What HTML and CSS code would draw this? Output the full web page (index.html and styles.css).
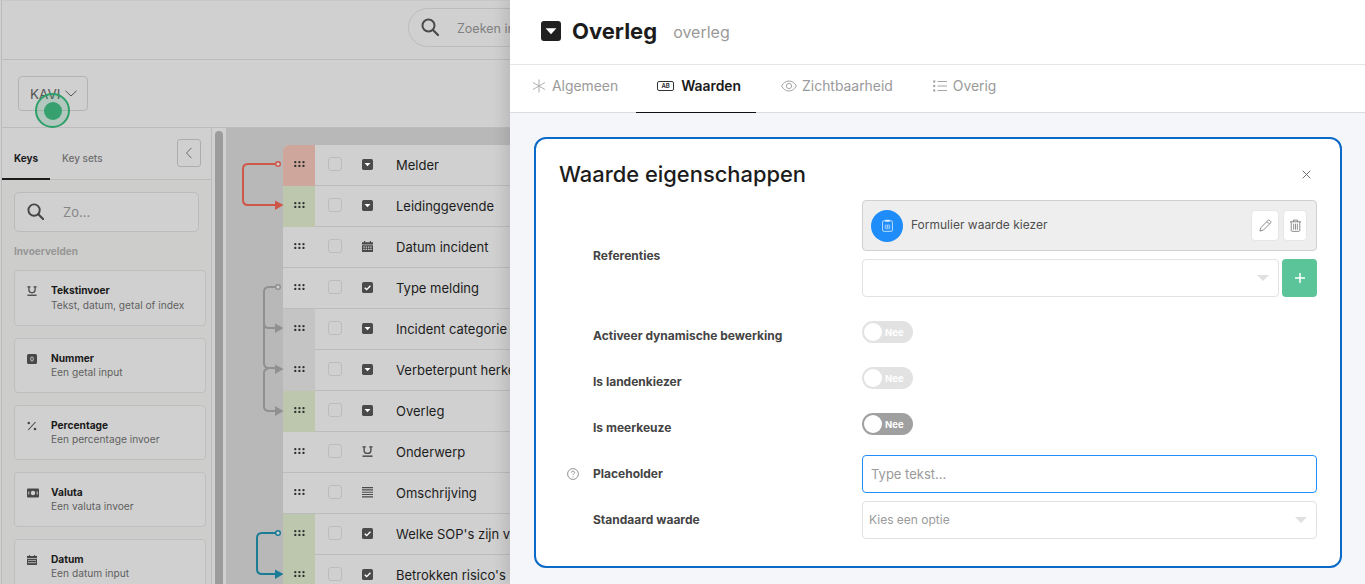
FILE: index.html
```html
<!DOCTYPE html>
<html lang="nl">
<head>
<meta charset="utf-8">
<title>Overleg</title>
<link rel="stylesheet" href="styles.css">
</head>
<body>
<svg class="defs" width="0" height="0" aria-hidden="true">
  <symbol id="i-drop" viewBox="0 0 20 20"><rect width="20" height="20" rx="3" fill="currentColor"/><path d="M4.600 7.200h10.800L10 13.200z" fill="#fff"/></symbol>
  <symbol id="i-grip" viewBox="0 0 11 6"><g fill="currentColor"><circle cx="1.300" cy="1.200" r="1.150"/><circle cx="5.400" cy="1.200" r="1.150"/><circle cx="9.500" cy="1.200" r="1.150"/><circle cx="1.300" cy="4.900" r="1.150"/><circle cx="5.400" cy="4.900" r="1.150"/><circle cx="9.500" cy="4.900" r="1.150"/></g></symbol>
  <symbol id="i-check" viewBox="0 0 12 12"><rect width="12" height="12" rx="2" fill="currentColor"/><path d="M3 6.200l2.100 2.100L9.200 4" fill="none" stroke="#fff" stroke-width="1.500"/></symbol>
  <symbol id="i-cal" viewBox="0 0 12 12"><path fill="currentColor" fill-rule="evenodd" d="M2.200 0h1.300v1.300h5V0h1.300v1.300H12v2.600H0V1.300h2.200zM0 4.700h12V12H0zm1.500 1.200v1.400H3V5.900zm2.500 0v1.400h1.500V5.900zm2.500 0v1.400H8V5.900zm2.500 0v1.400h1.500V5.900zm-7.500 2.600v1.400H3V8.500zm2.500 0v1.400h1.500V8.500zm2.500 0v1.400H8V8.500zm2.500 0v1.400h1.500V8.500z"/></symbol>
  <symbol id="i-under" viewBox="0 0 12 12"><path fill="none" stroke="currentColor" stroke-width="1.500" d="M.5 1h3.700M7.800 1h3.700M2.300 1v3.600c0 2.300 1.400 3.500 3.700 3.500s3.700-1.200 3.700-3.500V1"/><path stroke="currentColor" stroke-width="1.600" d="M.5 11.100h11"/></symbol>
  <symbol id="i-lines" viewBox="0 0 12 12"><path stroke="currentColor" stroke-width="1.300" d="M0 .7h12M0 3.200h12M0 5.700h12M0 8.200h12M0 10.700h12" fill="none"/></symbol>
  <symbol id="i-search" viewBox="0 0 18 18"><circle cx="7.500" cy="7.500" r="6" fill="none" stroke="currentColor" stroke-width="2"/><path d="M12 12l5 5" stroke="currentColor" stroke-width="2.200" stroke-linecap="round"/></symbol>
</svg>

<div class="app">
  <header class="topbar">
    <div class="pill">
      <svg class="pill-icon"><use href="#i-search"/></svg>
      <span class="pill-text">Zoeken in</span>
    </div>
  </header>
  <div class="toolbar">
    <button class="kavi">KAVI
      <svg class="kavi-chev" viewBox="0 0 12 7"><path d="M.5.800L6 6l5.500-5.200" fill="none" stroke="currentColor"/></svg>
    </button>
  </div>
  <div class="main">
    <aside class="side">
      <div class="side-tabs">
        <span class="side-tab side-tab-on">Keys</span>
        <span class="side-tab">Key sets</span>
        <button class="collapse"><svg class="collapse-icon" viewBox="0 0 8 12"><path d="M6.500.800L1.500 6l5 5.200" fill="none" stroke="currentColor"/></svg></button>
      </div>
      <div class="side-search">
        <svg class="side-search-icon"><use href="#i-search"/></svg>
        <span>Zo...</span>
      </div>
      <div class="side-label">Invoervelden</div>
      <div class="kcards">
        <div class="kcard kcard-first">
          <svg class="kcard-icon"><use href="#i-under"/></svg>
          <div><div class="kcard-title">Tekstinvoer</div><div class="kcard-desc kcard-desc-first">Tekst, datum, getal of index</div></div>
        </div>
        <div class="kcard">
          <svg class="kcard-icon" viewBox="0 0 10 10"><rect width="10" height="10" rx="1.500" fill="currentColor"/><rect x="3.800" y="3" width="2.400" height="4" rx="1.100" fill="none" stroke="#d0d0d0" stroke-width=".9"/></svg>
          <div><div class="kcard-title">Nummer</div><div class="kcard-desc">Een getal input</div></div>
        </div>
        <div class="kcard">
          <svg class="kcard-icon" viewBox="0 0 10 10"><path d="M1.200 9L8.500 1" stroke="currentColor" stroke-width="1.100"/><circle cx="1.800" cy="2" r="1.300" fill="currentColor"/><circle cx="8" cy="8" r="1.300" fill="currentColor"/></svg>
          <div><div class="kcard-title">Percentage</div><div class="kcard-desc">Een percentage invoer</div></div>
        </div>
        <div class="kcard">
          <svg class="kcard-icon kcard-icon-wide" viewBox="0 0 12 10"><path fill="currentColor" fill-rule="evenodd" d="M1 .5h10a1 1 0 011 1v7a1 1 0 01-1 1H1a1 1 0 01-1-1v-7a1 1 0 011-1zM6 2.800a2.200 2.200 0 100 4.400 2.200 2.200 0 000-4.400zM1.300 3.500v3h1v-3zm8.400 0v3h1v-3z"/></svg>
          <div><div class="kcard-title">Valuta</div><div class="kcard-desc">Een valuta invoer</div></div>
        </div>
        <div class="kcard">
          <svg class="kcard-icon"><use href="#i-cal"/></svg>
          <div><div class="kcard-title">Datum</div><div class="kcard-desc">Een datum input</div></div>
        </div>
      </div>
    </aside>
    <div class="track"><div class="thumb"></div></div>
    <section class="canvas">
      <div class="row row-first"><span class="cell cell-red"><svg class="grip"><use href="#i-grip"/></svg></span><span class="box"></span><svg class="ricon"><use href="#i-drop"/></svg><span class="rname">Melder</span></div>
      <div class="row"><span class="cell cell-green"><svg class="grip"><use href="#i-grip"/></svg></span><span class="box"></span><svg class="ricon"><use href="#i-drop"/></svg><span class="rname">Leidinggevende</span></div>
      <div class="row"><span class="cell"><svg class="grip"><use href="#i-grip"/></svg></span><span class="box"></span><svg class="ricon"><use href="#i-cal"/></svg><span class="rname">Datum incident</span></div>
      <div class="row"><span class="cell"><svg class="grip"><use href="#i-grip"/></svg></span><span class="box"></span><svg class="ricon"><use href="#i-check"/></svg><span class="rname">Type melding</span></div>
      <div class="row"><span class="cell cell-grey"><svg class="grip"><use href="#i-grip"/></svg></span><span class="box"></span><svg class="ricon"><use href="#i-drop"/></svg><span class="rname">Incident categorie</span></div>
      <div class="row"><span class="cell cell-grey"><svg class="grip"><use href="#i-grip"/></svg></span><span class="box"></span><svg class="ricon"><use href="#i-drop"/></svg><span class="rname">Verbeterpunt herkend</span></div>
      <div class="row"><span class="cell cell-green"><svg class="grip"><use href="#i-grip"/></svg></span><span class="box"></span><svg class="ricon"><use href="#i-drop"/></svg><span class="rname">Overleg</span></div>
      <div class="row"><span class="cell"><svg class="grip"><use href="#i-grip"/></svg></span><span class="box"></span><svg class="ricon"><use href="#i-under"/></svg><span class="rname">Onderwerp</span></div>
      <div class="row"><span class="cell"><svg class="grip"><use href="#i-grip"/></svg></span><span class="box"></span><svg class="ricon"><use href="#i-lines"/></svg><span class="rname">Omschrijving</span></div>
      <div class="row"><span class="cell cell-green"><svg class="grip"><use href="#i-grip"/></svg></span><span class="box"></span><svg class="ricon"><use href="#i-check"/></svg><span class="rname">Welke SOP's zijn van</span></div>
      <div class="row"><span class="cell cell-green"><svg class="grip"><use href="#i-grip"/></svg></span><span class="box"></span><svg class="ricon"><use href="#i-check"/></svg><span class="rname">Betrokken risico's</span></div>
    </section>
  </div>

  <svg class="wires" viewBox="0 0 510 584">
    <g class="wire-red">
      <path d="M275.500 164H248q-5 0-5 5v31q0 5 5 5h27"/>
      <circle cx="278" cy="164" r="2.300"/>
      <polygon points="275,200.500 283.500,205 275,210"/>
    </g>
    <g class="wire-grey">
      <path d="M275.500 287H269q-5 0-5 5v31q0 5 5 5h6M264 320v43q0 5 5 5h6"/>
      <path d="M268 369q-4 0-4 4v33q0 5 5 5h6"/>
      <circle cx="278" cy="287" r="2.300"/>
      <polygon points="275,323.500 283.500,328 275,333"/>
      <polygon points="275,364.500 283.500,369 275,374"/>
      <polygon points="275,406 283.500,411 275,416"/>
    </g>
    <g class="wire-teal">
      <path d="M275.500 533H262q-5 0-5 5v31q0 5 5 5h13"/>
      <circle cx="278" cy="533" r="2.300"/>
      <polygon points="275,569.500 283.500,574 275,579"/>
    </g>
  </svg>
  <div class="hotspot"><span class="hotspot-dot"></span></div>
</div>

<aside class="drawer">
  <header class="d-head">
    <svg class="d-icon"><use href="#i-drop"/></svg>
    <h1 class="d-title">Overleg</h1>
    <span class="d-key">overleg</span>
  </header>
  <nav class="d-tabs">
    <a class="d-tab">
      <svg class="t-icon" viewBox="0 0 14 14"><path d="M7 .5v13M1 3.500l12 7M13 3.500l-12 7" stroke="currentColor" fill="none" stroke-width=".9"/></svg>
      Algemeen
    </a>
    <a class="d-tab d-tab-on"><span class="ab">AB</span>Waarden</a>
    <a class="d-tab">
      <svg class="t-icon t-icon-eye" viewBox="0 0 16 12"><path d="M.6 6C2.500 2.600 5 1 8 1s5.500 1.600 7.400 5C13.500 9.400 11 11 8 11S2.500 9.400.6 6z" fill="none" stroke="currentColor"/><circle cx="8" cy="6" r="2.600" fill="none" stroke="currentColor"/></svg>
      Zichtbaarheid
    </a>
    <a class="d-tab">
      <svg class="t-icon" viewBox="0 0 14 14"><path d="M4.500 2.500H14M4.500 7H14M4.500 11.500H14" stroke="currentColor" fill="none"/><g fill="currentColor"><circle cx="1.200" cy="2.500" r="1.200"/><circle cx="1.200" cy="7" r="1.200"/><circle cx="1.200" cy="11.500" r="1.200"/></g></svg>
      Overig
    </a>
  </nav>
  <div class="d-body">
    <section class="card">
      <div class="card-head">
        <h2 class="card-title">Waarde eigenschappen</h2>
        <svg class="card-close" viewBox="0 0 9 9"><path d="M.7.7l7.600 7.600M8.300.7L.7 8.300" stroke="currentColor" fill="none"/></svg>
      </div>
      <div class="frow frow-ref">
        <span class="flabel flabel-ref">Referenties</span>
        <div class="fctl">
          <div class="ref">
            <span class="ref-dot">
              <svg class="ref-clip" viewBox="0 0 12 14"><rect x=".6" y="1.800" width="10.800" height="11.600" rx="1.500" fill="none" stroke="currentColor" stroke-width=".9"/><rect x="3.500" y=".6" width="5" height="2.400" rx=".6" fill="currentColor"/><path d="M3.500 6.500h5v4h-5zM6 6.500v4M3.500 8.500h5" stroke="currentColor" fill="none" stroke-width=".6"/></svg>
            </span>
            <span class="ref-name">Formulier waarde kiezer</span>
            <button class="ref-btn ref-btn-edit"><svg class="ref-icon" viewBox="0 0 14 14"><path d="M1 13l.9-3.600L9.800 1.500a1.200 1.200 0 011.700 0l1 1a1.200 1.200 0 010 1.700L4.600 12.100zM8.600 2.700l2.700 2.700" fill="none" stroke="currentColor" stroke-width=".9"/></svg></button>
            <button class="ref-btn ref-btn-del"><svg class="ref-icon" viewBox="0 0 14 14"><path d="M1 3h12M4.800 3V1.200h4.400V3M2.400 3v9.300c0 .6.500 1 1 1h7.200c.6 0 1-.4 1-1V3M5 5v6.500M7 5v6.500M9 5v6.500" fill="none" stroke="currentColor" stroke-width=".9"/></svg></button>
          </div>
          <div class="ref-add">
            <div class="select select-grow"><span class="caret"></span></div>
            <button class="plus"><svg class="plus-icon" viewBox="0 0 10 10"><path d="M5 0v10M0 5h10" stroke="currentColor" stroke-width="1.500"/></svg></button>
          </div>
        </div>
      </div>
      <div class="frow">
        <span class="flabel">Activeer dynamische bewerking</span>
        <div class="fctl"><span class="toggle"><span class="knob"></span>Nee</span></div>
      </div>
      <div class="frow">
        <span class="flabel">Is landenkiezer</span>
        <div class="fctl"><span class="toggle"><span class="knob"></span>Nee</span></div>
      </div>
      <div class="frow">
        <span class="flabel">Is meerkeuze</span>
        <div class="fctl"><span class="toggle toggle-on"><span class="knob"></span>Nee</span></div>
      </div>
      <div class="frow">
        <svg class="help" viewBox="0 0 12 12"><circle cx="6" cy="6" r="5.400" fill="none" stroke="currentColor" stroke-width=".8"/><path d="M4.400 4.700C4.400 3.700 5.100 3.200 6 3.200s1.600.5 1.600 1.400c0 1.200-1.600 1.200-1.600 2.500" fill="none" stroke="currentColor" stroke-width=".8"/><circle cx="6" cy="8.700" r=".5" fill="currentColor"/></svg>
        <span class="flabel">Placeholder</span>
        <div class="fctl fctl-input"><input class="input" placeholder="Type tekst..."></div>
      </div>
      <div class="frow">
        <span class="flabel">Standaard waarde</span>
        <div class="fctl fctl-input"><div class="select"><span class="select-text">Kies een optie</span><span class="caret"></span></div></div>
      </div>
    </section>
  </div>
</aside>
</body>
</html>
```

FILE: styles.css
```css
* { box-sizing: border-box; }
html, body { margin: 0; height: 100%; }
body {
  position: relative;
  height: 584px;
  overflow: hidden;
  background: #d0d0d0;
  font-family: Inter, "Liberation Sans", sans-serif;
  color: #1a1a1a;
}
button { font: inherit; padding: 0; }
h1, h2 { margin: 0; }
.defs { position: absolute; }

/* dimmed page behind the drawer */
.app {
  position: relative;
  height: 584px;
  margin-left: 1px;
  border-left: 1px solid #bcbcbc;
  background: #d0d0d0;
  display: flex;
  flex-direction: column;
}
.topbar {
  flex: none;
  height: 60px;
  padding: 8px 0 0 406px;
  border-top: 1px solid #c8c8c8;
  border-bottom: 1px solid #bcbcbc;
}
.pill {
  display: flex;
  align-items: center;
  width: 300px;
  height: 39px;
  margin-top: -1px;
  padding: 1px 0 0 12px;
  border: 1px solid #bcbcbc;
  border-radius: 20px;
  color: #808080;
  font-size: 12.500px;
}
.pill-icon { width: 18px; height: 18px; margin-top: -2px; color: #4a4a4a; margin-right: 18px; }
.pill-text { white-space: nowrap; }
.toolbar {
  flex: none;
  height: 68px;
  padding: 16px 0 0 16px;
  border-bottom: 1px solid #bcbcbc;
}
.kavi {
  display: flex;
  align-items: center;
  width: 70px;
  height: 35px;
  padding-left: 11px;
  border: 1px solid #b4b4b4;
  border-radius: 4px;
  background: transparent;
  color: #555;
  font-size: 13.500px;
}
.kavi-chev { width: 12px; height: 7px; margin-left: 5px; color: #555; }
.hotspot {
  position: absolute;
  left: 33px;
  top: 93px;
  width: 35px;
  height: 35px;
  display: flex;
  align-items: center;
  justify-content: center;
  border: 2px solid #2da069;
  border-radius: 50%;
  background: rgba(46, 160, 105, .18);
}
.hotspot-dot { width: 18px; height: 18px; border-radius: 50%; background: #36a06f; }

.main { flex: 1; min-height: 0; display: flex; }
.side {
  flex: none;
  width: 210px;
  padding: 0 5px 0 12px;
  border-right: 1px solid #bcbcbc;
  background: #cdcdcb;
  overflow: hidden;
}
.side-tabs {
  display: flex;
  height: 52px;
  margin: 0 -5px 0 -12px;
  background: #d0d0d0;
  border-bottom: 1px solid #bcbcbc;
}
.side-tab {
  height: 51px;
  padding-top: 24px;
  padding-left: 12px;
  width: 48px;
  color: #6e6e6e;
  font-size: 10px;
  font-weight: 500;
  white-space: nowrap;
}
.side-tab-on { color: #1c1c1c; font-weight: 700; border-bottom: 2px solid #1c1c1c; height: 52px; }
.collapse {
  margin: 11px 10px 0 auto;
  width: 24px;
  height: 28px;
  display: flex;
  align-items: center;
  justify-content: center;
  background: transparent;
  border: 1px solid #adadad;
  border-radius: 3px;
  color: #6a6a6a;
}
.collapse-icon { width: 8px; height: 12px; }
.side-search {
  display: flex;
  align-items: center;
  width: 185px;
  height: 40px;
  margin-top: 12px;
  padding: 0 0 1px 12px;
  border: 1px solid #bcbcbc;
  border-radius: 5px;
  background: #d0d0d0;
  color: #868686;
  font-size: 13px;
}
.side-search-icon { width: 17px; height: 17px; margin-right: 19px; color: #444; }
.side-label {
  margin-top: 13px;
  height: 13px;
  line-height: 13px;
  color: #969696;
  font-size: 10px;
  font-weight: 700;
}
.kcards { margin-top: 12px; display: flex; flex-direction: column; gap: 12px; }
.kcard {
  flex: none;
  display: flex;
  width: 192px;
  height: 55px;
  padding: 12px 0 0 12px;
  border: 1px solid #bfbfbf;
  border-radius: 4px;
  background: #d0d0d0;
}
.kcard-first { height: 56px; }
.kcard-icon { flex: none; width: 10px; height: 10px; margin: 3px 14px 0 0; color: #484848; }
.kcard-icon-wide { width: 12px; margin-right: 12px; }
.kcard-title { font-size: 10.200px; line-height: 14px; font-weight: 700; color: #1a1a1a; }
.kcard-desc { font-size: 10.200px; line-height: 14px; color: #5f5f5f; white-space: nowrap; }
.kcard-desc-first { margin-top: 1px; }

.track { flex: none; width: 14px; background: #d0d0d0; padding: 3px 3px 0; }
.thumb { height: 460px; border-radius: 4px 4px 0 0; background: #9c9c9c; }
.canvas { flex: 1; min-width: 0; padding: 17px 0 0 57px; background: #b8b8b8; overflow: hidden; }
.row {
  display: flex;
  align-items: stretch;
  height: 41px;
  background: #d0d0d0;
  border-bottom: 1px solid #bcbcbc;
}
.row-first { border-top-left-radius: 6px; }
.row-first .cell { border-top-left-radius: 6px; }
.cell { flex: none; width: 32px; display: flex; align-items: center; justify-content: center; padding-bottom: 3px; margin-bottom: -1px; }
.cell-red { background: #cfa69b; }
.cell-green { background: #bcc7ae; }
.cell-grey { background: #c4c4c4; }
.grip { width: 11px; height: 6px; color: #2f2f2f; }
.box {
  flex: none;
  width: 14px;
  height: 14px;
  margin: 12px 0 0 13px;
  border: 1px solid #bcbcbc;
  border-radius: 3px;
}
.ricon { flex: none; width: 11px; height: 11px; margin: 14px 0 0 20px; color: #4a4a4a; }
.rname { margin-left: 23px; line-height: 40px; font-size: 13px; color: #1c1c1c; white-space: nowrap; }

.wires { position: absolute; left: -2px; top: 0; width: 510px; height: 584px; pointer-events: none; overflow: visible; }
.wires path { fill: none; stroke-width: 2; }
.wires circle { fill: #d0d0d0; stroke-width: 1.500; }
.wire-red path, .wire-red circle { stroke: #cf574a; }
.wire-red polygon { fill: #cf574a; }
.wire-grey path, .wire-grey circle { stroke: #909090; }
.wire-grey polygon { fill: #909090; }
.wire-teal path, .wire-teal circle { stroke: #1b7c96; }
.wire-teal polygon { fill: #1b7c96; }

/* drawer */
.drawer {
  position: absolute;
  left: 510px;
  top: 0;
  width: 855px;
  height: 584px;
  display: flex;
  flex-direction: column;
  background: #f5f6f9;
  box-shadow: -6px 0 12px rgba(0, 0, 0, .10);
}
.d-head {
  flex: none;
  display: flex;
  align-items: center;
  height: 65px;
  padding: 0 0 3px 31px;
  background: #fff;
  border-bottom: 1px solid #e5e5e5;
}
.d-icon { width: 20px; height: 20px; color: #1f1f1f; margin-right: 11px; }
.d-title { font-size: 22px; font-weight: 700; color: #1c1c1c; line-height: 28px; }
.d-key { margin-left: 16px; font-size: 16px; color: #9a9a9a; padding-top: 3px; }
.d-tabs {
  flex: none;
  display: flex;
  gap: 4px;
  height: 48px;
  padding-left: 1px;
  background: #fff;
  border-bottom: 1px solid #dcdcdc;
}
.d-tab {
  display: flex;
  align-items: center;
  height: 48px;
  padding: 0 15px 6px 21px;
  color: #9a9a9a;
  font-size: 13.900px;
  white-space: nowrap;
}
.d-tab-on { margin-left: -1px; color: #1a1a1a; font-weight: 600; border-bottom: 1px solid #111; }
.t-icon { width: 14px; height: 14px; margin-right: 6px; color: #a6a6a6; }
.t-icon-eye { width: 16px; height: 12px; margin-right: 5px; }
.ab {
  width: 17px;
  height: 10px;
  margin-right: 7px;
  border: 1px solid #333;
  border-radius: 2px;
  font-size: 6px;
  font-weight: 600;
  line-height: 8px;
  text-align: center;
}
.d-body { flex: 1; min-height: 0; padding: 24px 23px 0 24px; }
.card {
  height: 431px;
  padding: 0 23px;
  background: #fff;
  border: 2px solid #0b69c7;
  border-radius: 12px;
}
.card-head { display: flex; align-items: center; justify-content: space-between; height: 61px; padding: 9px 6px 0 0; }
.card-title { font-size: 21.900px; font-weight: 500; color: #1c1c1c; }
.card-close { width: 9px; height: 9px; color: #6c6c6c; }
.frow { position: relative; display: flex; align-items: flex-start; height: 46px; padding-left: 34px; }
.frow-ref { height: 113px; }
.flabel {
  flex: none;
  width: 269px;
  line-height: 45px;
  font-size: 12px;
  font-weight: 700;
  color: #444;
}
.flabel-ref { margin-top: 33px; }
.fctl { flex: 1; min-width: 0; padding-top: 8px; }
.fctl-input { padding-top: 4px; }
.frow-ref .fctl { padding-top: 0; }
.help { position: absolute; left: 8px; top: 17px; width: 12px; height: 12px; color: #777; }
.ref {
  display: flex;
  align-items: center;
  height: 51px;
  padding: 0 9px 0 8px;
  background: #eee;
  border: 1px solid #d0d0d0;
  border-radius: 4px;
}
.ref-dot {
  flex: none;
  width: 32px;
  height: 32px;
  display: flex;
  align-items: center;
  justify-content: center;
  border-radius: 50%;
  background: #1e8dfa;
  color: #d8ebff;
}
.ref-clip { width: 11px; height: 13px; }
.ref-name { flex: 1; margin-left: 8px; padding-bottom: 2px; font-size: 12px; color: #4f4f4f; }
.ref-btn {
  flex: none;
  height: 31px;
  display: flex;
  align-items: center;
  justify-content: center;
  background: #fff;
  border: 1px solid #e6e6e6;
  border-radius: 4px;
  color: #777;
}
.ref-btn-edit { width: 28px; margin-right: 4px; }
.ref-btn-del { width: 24px; }
.ref-icon { width: 13px; height: 13px; }
.ref-add { display: flex; gap: 3px; margin-top: 8px; }
.select {
  display: flex;
  align-items: center;
  height: 38px;
  padding: 0 9px 0 6px;
  background: #fff;
  border: 1px solid #e2e2e2;
  border-radius: 4px;
}
.select-grow { flex: 1; min-width: 0; }
.select-text { padding-bottom: 2px; font-size: 12px; color: #9a9a9a; }
.caret {
  margin-left: auto;
  width: 0;
  height: 0;
  border-left: 6px solid transparent;
  border-right: 6px solid transparent;
  border-top: 6px solid #e0e0e0;
}
.plus {
  flex: none;
  width: 35px;
  height: 38px;
  display: flex;
  align-items: center;
  justify-content: center;
  background: #5bc599;
  border: 0;
  border-radius: 4px;
  color: #fff;
}
.plus-icon { width: 10px; height: 10px; }
.toggle {
  display: inline-flex;
  align-items: center;
  gap: 3px;
  width: 51px;
  height: 22px;
  padding-left: 2px;
  border-radius: 11px;
  background: #e2e2e2;
  color: #fff;
  font-size: 9.500px;
  font-weight: 700;
  vertical-align: top;
}
.toggle-on { background: #a0a0a0; }
.knob { width: 18px; height: 18px; border-radius: 50%; background: #fff; }
.input {
  display: block;
  width: 100%;
  height: 38px;
  padding: 0 8px;
  border: 1px solid #1e8dfa;
  border-radius: 4px;
  outline: 0;
  font: 13px Inter, "Liberation Sans", sans-serif;
}
.input::placeholder { color: #9a9a9a; opacity: 1; }
```
